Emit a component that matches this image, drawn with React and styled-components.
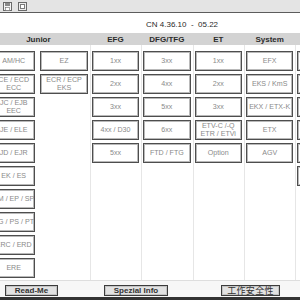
import React from 'react'
import styled, { createGlobalStyle } from 'styled-components'

const GlobalStyle = createGlobalStyle`
  html, body {
    margin: 0;
    padding: 0;
    background: #ffffff;
    overflow: hidden;
  }
  body {
    font-family: "Liberation Sans", Arial, sans-serif;
  }
`

const CELL = 51.4

const Window = styled.div`
  width: 300px;
  height: 300px;
  display: flex;
  flex-direction: column;
  overflow: hidden;
  background: #fff;
`

const TopBar = styled.div`
  height: 12px;
  flex: none;
  background: #e4e4e4;
  border-bottom: 1px solid #5c5c5c;
  display: flex;
  align-items: center;
  gap: 6px;
  padding-left: 3px;
`

const VersionBar = styled.div`
  height: 20px;
  flex: none;
  display: flex;
  align-items: center;
  padding-left: 146px;
  padding-top: 2px;
  box-sizing: border-box;
  font-size: 8px;
  color: #2a2a2a;
  white-space: pre;
`

const Sheet = styled.div`
  margin-left: -13px;
  width: ${CELL * 7 + 20}px;
  display: flex;
  flex-direction: column;
`

const HeaderRow = styled.div`
  height: 12px;
  display: grid;
  grid-template-columns: ${CELL * 2}px repeat(5, ${CELL}px);
  background: #d3d3d3;
`

const HeaderCell = styled.div`
  display: flex;
  align-items: center;
  justify-content: center;
  font-size: 8px;
  font-weight: bold;
  color: #2b2b2b;
`

const Body = styled.div`
  height: 235px;
  display: grid;
  grid-template-columns: repeat(7, ${CELL}px);
`

const Column = styled.div`
  display: flex;
  flex-direction: column;
  gap: 3px;
  padding: 6px 2px 0 ${p => p.$padLeft ?? 2}px;
  box-sizing: border-box;
  border-right: 1px solid ${p => (p.$sep ? '#e6e6e6' : 'transparent')};
  margin-right: ${p => (p.$sep ? '-1px' : '0')};
`

const Tile = styled.div`
  height: 20px;
  box-sizing: border-box;
  border: 1px solid #4e4e4e;
  box-shadow: inset 0 0 0 1px #b9b9b9;
  background: #fff;
  display: flex;
  align-items: center;
  justify-content: center;
  text-align: center;
  font-size: 7.1px;
  line-height: 8px;
  color: #8a8a8a;
  white-space: pre;
`

const Footer = styled.div`
  height: 17px;
  flex: none;
  box-sizing: border-box;
  border-top: 1px solid #dedede;
  background: #f7f7f7;
  display: flex;
  align-items: flex-start;
  padding-top: 4px;
`

const FooterButton = styled.div`
  height: 11px;
  box-sizing: border-box;
  width: ${p => p.$w}px;
  margin-left: ${p => p.$left}px;
  border: 1px solid #3c3c3c;
  box-shadow: inset 0 0 0 1px #c4c4c4;
  background: #e2e2e2;
  display: flex;
  align-items: center;
  justify-content: center;
  font-size: ${p => (p.$cjk ? '9px' : '8px')};
  font-weight: ${p => (p.$cjk ? 'normal' : 'bold')};
  font-family: "Liberation Sans", "Noto Sans CJK SC", sans-serif;
  color: #333;
  letter-spacing: ${p => (p.$cjk ? '0.3px' : '0')};
`

const BottomBar = styled.div`
  height: 3px;
  flex: none;
  background: #333;
`

const columns = [
  { sep: false, pad: 5, items: ['AM/HC', 'CE / ECD\nECC', 'JC / EJB\nEEC', 'JE / ELE', 'JD / EJR', 'EK / ES', 'EM / EP / SP', 'EG / PS / PT', 'ERC / ERD', 'ERE'] },
  { sep: true, items: ['EZ', 'ECR / ECP\nEKS'] },
  { sep: true, items: ['1xx', '2xx', '3xx', '4xx / D30', '5xx'] },
  { sep: true, items: ['3xx', '4xx', '5xx', '6xx', 'FTD / FTG'] },
  { sep: true, items: ['1xx', '2xx', '3xx', 'ETV-C /-Q\nETR / ETVi', 'Option'] },
  { sep: true, items: ['EFX', 'EKS / KmS', 'EKX / ETX-K', 'ETX', 'AGV'] },
  { sep: false, items: ['', '', '', '', '', ''] },
]

const headers = ['Junior', 'EFG', 'DFG/TFG', 'ET', 'System', '']

function SaveIcon() {
  return (
    <svg width="9" height="9" viewBox="0 0 9 9">
      <rect x="0.5" y="0.5" width="8" height="8" fill="#f4f4f4" stroke="#6a6a6a" />
      <rect x="2" y="1" width="5" height="3" fill="#8a8a8a" />
      <rect x="2.5" y="5.5" width="4" height="3" fill="#fff" stroke="#6a6a6a" strokeWidth="0.6" />
    </svg>
  )
}

function FrameIcon() {
  return (
    <svg width="9" height="9" viewBox="0 0 9 9">
      <rect x="0.5" y="0.5" width="8" height="8" fill="#ececec" stroke="#6a6a6a" />
      <rect x="2.5" y="2.5" width="4" height="4" fill="#fff" stroke="#7a7a7a" />
    </svg>
  )
}

export default function App() {
  return (
    <>
      <GlobalStyle />
      <Window>
        <TopBar>
          <SaveIcon />
          <FrameIcon />
        </TopBar>
        <VersionBar>CN 4.36.10  -  05.22</VersionBar>
        <Sheet>
          <HeaderRow>
            {headers.map((h, i) => (
              <HeaderCell key={i}>{h}</HeaderCell>
            ))}
          </HeaderRow>
          <Body>
            {columns.map((col, i) => (
              <Column key={i} $sep={col.sep} $padLeft={col.pad}>
                {col.items.map((t, j) => (
                  <Tile key={j}>{t}</Tile>
                ))}
              </Column>
            ))}
          </Body>
        </Sheet>
        <Footer>
          <FooterButton $left={5} $w={53}>Read-Me</FooterButton>
          <FooterButton $left={46} $w={64}>Spezial Info</FooterButton>
          <FooterButton $left={53} $w={59} $cjk>工作安全性</FooterButton>
        </Footer>
        <BottomBar />
      </Window>
    </>
  )
}
